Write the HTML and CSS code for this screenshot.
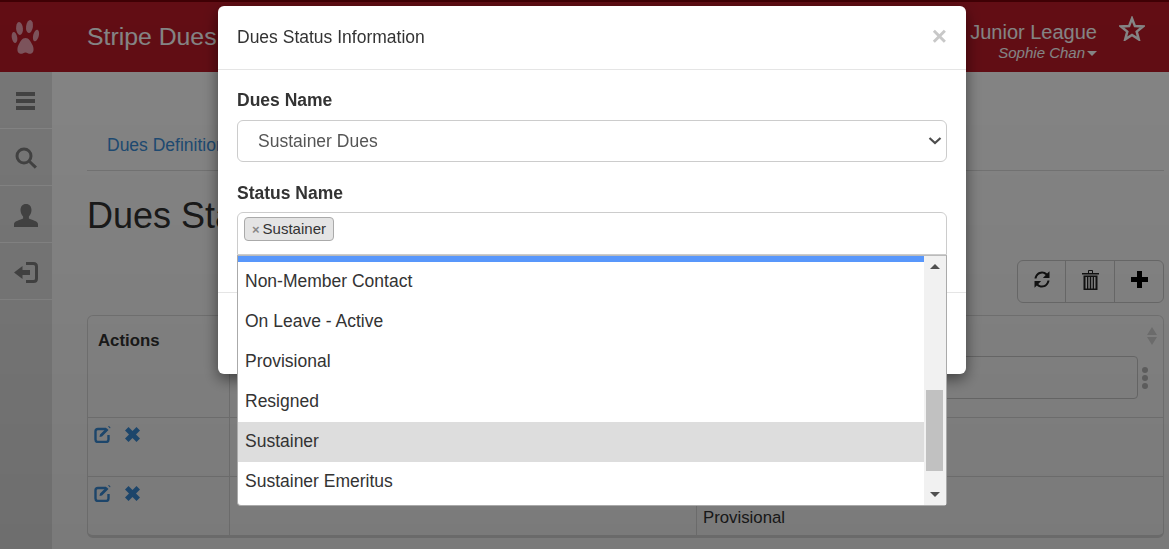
FILE: index.html
```html
<!DOCTYPE html>
<html lang="en">
<head>
    <meta charset="UTF-8">
    <meta name="viewport" content="width=device-width, initial-scale=1.0">
    <title>Dues Status</title>
    <link rel="stylesheet" href="styles.css">
</head>
<body>
    <div class="topbar">
        <svg class="paw" viewBox="0 0 30 36" width="30" height="36">
            <ellipse cx="3.500" cy="18.500" rx="2.700" ry="5.500" transform="rotate(-10 3.500 18.500)"/>
            <ellipse cx="8.500" cy="9.500" rx="3.400" ry="6.500" transform="rotate(-5 8.500 9.500)"/>
            <ellipse cx="18.500" cy="7.500" rx="3.400" ry="6.500" transform="rotate(8 18.500 7.500)"/>
            <ellipse cx="25" cy="16.500" rx="2.800" ry="6" transform="rotate(14 25 16.500)"/>
            <path d="M14.500 19c3.500 0 5.200 3.500 7 7 1.500 3 1.800 8-1.800 8.800-2 .4-3.400-1.300-5.200-1.300s-3.200 1.700-5.200 1.300c-3.600-.8-3.300-5.800-1.800-8.800 1.800-3.500 3.500-7 7-7z"/>
        </svg>
        <div class="brand">Stripe Dues</div>
        <div class="org">
            <div class="org-name">Junior League</div>
            <div class="org-user">Sophie Chan<span class="caret"></span></div>
        </div>
        <svg class="star" viewBox="0 0 26 25" width="26" height="25">
            <path d="M13 2.500l2.900 7.600 8.100.4-6.300 5.100 2.100 7.800L13 18.900l-6.800 4.500 2.100-7.800L2 10.500l8.100-.4z" fill="none" stroke="currentColor" stroke-width="2.500"/>
        </svg>
    </div>

    <div class="layout">
        <div class="sidebar">
            <div class="side-item">
                <svg viewBox="0 0 20 18" width="20" height="18"><path d="M0 0h19v4H0zM0 7h19v4H0zM0 14h19v4H0z"/></svg>
            </div>
            <div class="side-item">
                <svg viewBox="0 0 22 22" width="22" height="22"><circle cx="9" cy="9" r="7" fill="none" stroke="currentColor" stroke-width="3"/><path d="M13.500 15.500l2-2 6.500 6-2.200 2.300z"/></svg>
            </div>
            <div class="side-item">
                <svg viewBox="0 0 24 23" width="24" height="23"><path d="M12 0c3.600 0 5.500 2.600 5.500 6 0 2.800-1.200 5-2.600 6.400v2.200c2.500 1.500 9.100 2.500 9.100 5.400V23H0v-3c0-2.900 6.600-3.900 9.100-5.400v-2.200C7.700 11 6.500 8.800 6.500 6 6.500 2.600 8.400 0 12 0z"/></svg>
            </div>
            <div class="side-item">
                <svg viewBox="0 0 24 21" width="24" height="21"><path d="M0 10.500L8.500 4v4H16v5H8.500v4z"/><path d="M12 1.500h7.500c2 0 3 1 3 3v12c0 2-1 3-3 3H12" fill="none" stroke="currentColor" stroke-width="3"/></svg>
            </div>
        </div>

        <div class="content">
            <div class="tabs"><a href="#">Dues Definition</a></div>
            <h1>Dues Status</h1>
            <div class="toolbar">
                <div class="btn-group">
                    <div class="btn">
                        <svg viewBox="0 0 18 19" width="18" height="19"><path d="M1.500 8.500C2.100 4.300 5.200 1.500 9 1.500c2 0 3.800.8 5.100 2.100L16.500 1.300V8h-6.600l2.800-2.900C11.700 4 10.400 3.400 9 3.400c-2.800 0-5 2.100-5.500 5.100zM16.500 10.500c-.6 4.200-3.700 7-7.500 7-2 0-3.800-.8-5.100-2.100L1.500 17.700V11h6.600l-2.800 2.900C6.300 15 7.600 15.600 9 15.600c2.800 0 5-2.100 5.500-5.100z"/></svg>
                    </div>
                    <div class="btn">
                        <svg viewBox="0 0 17 20" width="17" height="20"><path d="M0 3h6V1.200C6 .5 6.500 0 7 0h3c.5 0 1 .5 1 1.200V3h6v1.500H0zM7 1v2h3V1zM1.500 5.500h14V20h-14zM3.500 7v11.500h1.500V7zM6.300 7v11.500h1.500V7zM9.200 7v11.500h1.500V7zM12 7v11.500h1.500V7z" fill-rule="evenodd"/></svg>
                    </div>
                    <div class="btn">
                        <svg viewBox="0 0 17 17" width="17" height="17"><path d="M6 0h5v6h6v5h-6v6H6v-6H0V6h6z"/></svg>
                    </div>
                </div>
            </div>
            <table class="data-table">
                <colgroup><col class="col-actions"><col class="col-name"><col></colgroup>
                <tr class="head-row">
                    <th>Actions</th>
                    <th></th>
                    <th>
                        <div class="sort"><span class="sort-up"></span><span class="sort-down"></span></div>
                        <div class="filter">
                            <div class="filter-input"></div>
                            <div class="dots"><span></span><span></span><span></span></div>
                        </div>
                    </th>
                </tr>
                <tr>
                    <td class="row-actions">
                        <svg class="edit" viewBox="0 0 17 17" width="17" height="17"><path d="M12 3H4C2.500 3 1.500 4 1.500 5.500v8c0 1.500 1 2.500 2.500 2.500h8c1.500 0 2.500-1 2.500-2.500V9" fill="none" stroke="currentColor" stroke-width="2.400"/><path d="M6 8.500L12.500 2l2 2L8 10.500l-2.500.5zM14 .5l1-.5 1.500 1.500-.5 1z"/></svg>
                        <svg class="remove" viewBox="0 0 15 15" width="15" height="15"><path d="M3.500 0l4 4 4-4L15 3.500l-4 4 4 4-3.500 3.500-4-4-4 4L0 11.500l4-4-4-4z"/></svg>
                    </td>
                    <td class="cell-dash">-</td>
                    <td></td>
                </tr>
                <tr>
                    <td class="row-actions">
                        <svg class="edit" viewBox="0 0 17 17" width="17" height="17"><path d="M12 3H4C2.500 3 1.500 4 1.500 5.500v8c0 1.500 1 2.500 2.500 2.500h8c1.500 0 2.500-1 2.500-2.500V9" fill="none" stroke="currentColor" stroke-width="2.400"/><path d="M6 8.500L12.500 2l2 2L8 10.500l-2.500.5zM14 .5l1-.5 1.500 1.500-.5 1z"/></svg>
                        <svg class="remove" viewBox="0 0 15 15" width="15" height="15"><path d="M3.500 0l4 4 4-4L15 3.500l-4 4 4 4-3.500 3.500-4-4-4 4L0 11.500l4-4-4-4z"/></svg>
                    </td>
                    <td></td>
                    <td class="cell-bottom">Provisional</td>
                </tr>
            </table>
        </div>
    </div>

    <div class="backdrop"></div>

    <div class="modal">
        <div class="modal-header">
            <div class="modal-title">Dues Status Information</div>
            <div class="close">×</div>
        </div>
        <div class="modal-body">
            <div class="field">
                <label>Dues Name</label>
                <select class="select-box">
                    <option>Sustainer Dues</option>
                </select>
            </div>
            <div class="field">
                <label>Status Name</label>
                <div class="multi-wrap">
                    <div class="multi-box">
                        <span class="tag"><span class="tag-x">×</span>Sustainer</span>
                    </div>
                    <div class="dropdown">
                        <div class="options">
                            <div class="option-stub"></div>
                            <div class="option">Non-Member Contact</div>
                            <div class="option">On Leave - Active</div>
                            <div class="option">Provisional</div>
                            <div class="option">Resigned</div>
                            <div class="option selected">Sustainer</div>
                            <div class="option">Sustainer Emeritus</div>
                        </div>
                        <div class="scrollbar">
                            <span class="arrow-up"></span>
                            <div class="track"><div class="thumb"></div></div>
                            <span class="arrow-down"></span>
                        </div>
                    </div>
                </div>
            </div>
        </div>
        <div class="modal-footer"></div>
    </div>
</body>
</html>
```

FILE: styles.css
```css
/* General */
html, body {
    height: 100%;
}

body {
    margin: 0;
    padding: 0;
    font-family: "Liberation Sans", Arial, sans-serif;
    font-size: 17.5px;
    color: #333;
    background-color: #fff;
    overflow: hidden;
}

/* Top bar */
.topbar {
    height: 70px;
    border-top: 2px solid #7a0008;
    background-color: #bc1a28;
    color: #fff;
    display: flex;
    align-items: center;
}

.paw {
    width: 30px;
    height: 36px;
    margin-left: 11px;
    fill: #f0a0b0;
}

.brand {
    margin-left: 46px;
    font-size: 24.800px;
}

.org {
    margin-left: auto;
    text-align: right;
    margin-top: 7px;
}

.org-name {
    font-size: 20px;
    line-height: 24px;
}

.org-user {
    font-size: 15px;
    font-style: italic;
    line-height: 18px;
}

.caret {
    display: inline-block;
    margin-left: 2px;
    vertical-align: middle;
    border-top: 5px solid #fff;
    border-left: 5px solid transparent;
    border-right: 5px solid transparent;
}

.star {
    margin-left: 22px;
    margin-right: 24px;
    margin-top: -18px;
}

/* Page under the dialog */
.layout {
    display: flex;
    height: calc(100% - 72px);
}

.sidebar {
    width: 52px;
    flex-shrink: 0;
    background-color: #e6e6e6;
    color: #808080;
}

.side-item {
    height: 56px;
    border-bottom: 1px solid #fff;
    display: flex;
    align-items: center;
    justify-content: center;
    padding-right: 1px;
}

.side-item svg {
    fill: currentColor;
    margin-top: 2px;
}

.content {
    flex: 1;
    padding: 0 5px 0 35px;
}

.tabs {
    height: 99px;
    box-sizing: border-box;
    padding: 62px 0 0 20px;
    border-bottom: 1px solid #ddd;
    line-height: 22px;
}

.tabs a {
    color: #3c90dc;
    text-decoration: none;
}

.content h1 {
    margin: 24px 0 0;
    font-size: 36px;
    font-weight: normal;
    line-height: 42px;
}

.toolbar {
    display: flex;
    justify-content: flex-end;
    margin-top: 23px;
}

.btn-group {
    display: flex;
    height: 43px;
    box-sizing: border-box;
    border: 1px solid #ccc;
    border-radius: 6px;
}

.btn {
    width: 48px;
    display: flex;
    align-items: center;
    justify-content: center;
    border-left: 1px solid #ccc;
}

.btn:first-child {
    width: 47px;
    border-left: none;
}

.btn svg {
    fill: #222;
    margin-top: -4px;
}

.btn:last-child svg {
    fill: #000;
}

.data-table {
    width: 100%;
    margin-top: 12px;
    table-layout: fixed;
    border-collapse: separate;
    border-spacing: 0;
    border: 1px solid #ddd;
    border-bottom-width: 3px;
    border-radius: 6px;
    font-size: 16.800px;
}

.col-actions {
    width: 141px;
}

.col-name {
    width: 467px;
}

.data-table th,
.data-table td {
    height: 59px;
    box-sizing: border-box;
    padding: 8px 6px;
    vertical-align: top;
    text-align: left;
    border-left: 1px solid #ddd;
    border-top: 1px solid #ddd;
}

.data-table th:first-child,
.data-table td:first-child {
    border-left: none;
    padding-left: 10px;
}

.data-table .head-row th {
    height: 101px;
    border-top: none;
    padding-top: 15px;
}

.data-table .cell-bottom {
    vertical-align: bottom;
    padding-bottom: 7px;
}

.data-table .cell-dash {
    padding: 13px 7px;
}

.data-table td.row-actions {
    padding: 8px 6px;
    color: #3c90dc;
}

.row-actions svg {
    fill: currentColor;
    vertical-align: top;
}

.row-actions .remove {
    margin-left: 9px;
    margin-top: 1px;
}

.sort {
    display: flex;
    flex-direction: column;
    align-items: flex-end;
    gap: 2px;
    margin-top: -4px;
}

.sort-up,
.sort-down {
    border-left: 5px solid transparent;
    border-right: 5px solid transparent;
}

.sort-up {
    border-bottom: 8px solid #d8d8d8;
}

.sort-down {
    border-top: 8px solid #d8d8d8;
}

.filter {
    display: flex;
    align-items: center;
    margin-top: 11px;
    gap: 4px;
}

.filter-input {
    flex: 1;
    height: 43px;
    border: 1px solid #ccc;
    border-radius: 4px;
    box-sizing: border-box;
}

.dots {
    display: flex;
    flex-direction: column;
    gap: 2px;
    margin-right: 9px;
}

.dots span {
    width: 6px;
    height: 6px;
    border-radius: 50%;
    background-color: #bbb;
}

/* Dialog */
.backdrop {
    position: fixed;
    top: 0;
    left: 0;
    right: 0;
    bottom: 0;
    background: linear-gradient(rgba(0, 0, 0, 0.48), rgba(0, 0, 0, 0.52));
}

.modal {
    position: fixed;
    top: 6px;
    left: 218px;
    width: 748px;
    background-color: #fff;
    border-radius: 6px;
    box-shadow: 0 5px 15px rgba(0, 0, 0, 0.5);
}

.modal-header {
    height: 64px;
    box-sizing: border-box;
    padding: 0 19px;
    border-bottom: 1px solid #e5e5e5;
    display: flex;
    align-items: center;
    justify-content: space-between;
}

.modal-title {
    font-size: 17.5px;
}

.close {
    font-size: 26px;
    font-weight: bold;
    color: #c8c8c8;
    margin-top: -3px;
}

.modal-body {
    height: 222px;
    box-sizing: border-box;
    padding: 20px 19px 0;
}

.field {
    margin-bottom: 21px;
}

.field label {
    display: block;
    font-weight: bold;
    line-height: 20px;
    margin-bottom: 10px;
}

.select-box {
    display: block;
    width: 100%;
    height: 42px;
    padding: 6px 20px;
    font-family: inherit;
    font-size: 17.5px;
    color: #555;
    background: #fff url("data:image/svg+xml,%3Csvg xmlns='http://www.w3.org/2000/svg' width='14' height='8'%3E%3Cpath d='M1.500 1l5.500 5 5.500-5' fill='none' stroke='%234d4d4d' stroke-width='2.200'/%3E%3C/svg%3E") no-repeat right 4px center;
    appearance: none;
    border: 1px solid #ccc;
    border-radius: 6px;
}

.multi-wrap {
    position: relative;
    margin-top: -1px;
}

.multi-box {
    height: 43px;
    box-sizing: border-box;
    padding: 4px 6px;
    border: 1px solid #ccc;
    border-radius: 6px 6px 0 0;
}

.tag {
    display: inline-block;
    height: 24px;
    box-sizing: border-box;
    padding: 0 7px;
    font-size: 15px;
    line-height: 22px;
    background-color: #e4e4e4;
    border: 1px solid #aaa;
    border-radius: 4px;
}

.tag-x {
    color: #888;
    font-weight: bold;
    font-size: 13px;
    margin-right: 3px;
}

/* Open list of the status select */
.dropdown {
    position: absolute;
    top: 43px;
    left: 0;
    right: 0;
    height: 251px;
    box-sizing: border-box;
    display: flex;
    background-color: #fff;
    border: 1px solid #aaa;
    border-top-color: #bbb;
    border-radius: 0 0 4px 4px;
}

.options {
    flex: 1;
}

.option-stub {
    height: 6px;
    background-color: #5897fb;
}

.option {
    height: 40px;
    line-height: 38px;
    padding: 0 7px;
}

.option.selected {
    background-color: #ddd;
}

.scrollbar {
    width: 22px;
    background-color: #f1f1f1;
    display: flex;
    flex-direction: column;
    align-items: center;
    padding: 8px 0;
    box-sizing: border-box;
}

.arrow-up,
.arrow-down {
    border-left: 5px solid transparent;
    border-right: 5px solid transparent;
}

.arrow-up {
    border-bottom: 5px solid #505050;
}

.arrow-down {
    border-top: 5px solid #505050;
}

.track {
    flex: 1;
    align-self: stretch;
}

.thumb {
    width: 17px;
    height: 81px;
    margin: 121px 0 0 2px;
    background-color: #c1c1c1;
}

.modal-footer {
    height: 82px;
    border-top: 1px solid #e5e5e5;
    box-sizing: border-box;
}
```
